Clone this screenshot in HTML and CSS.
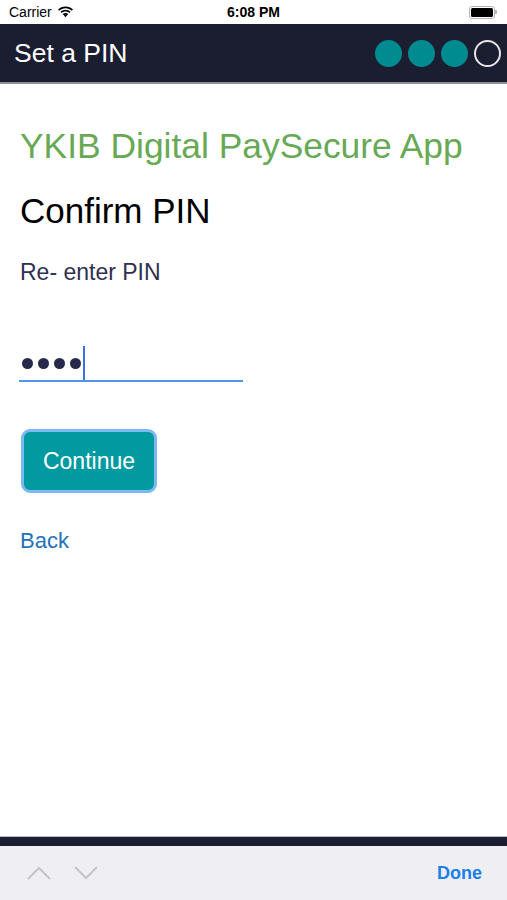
FILE: index.html
```html
<!DOCTYPE html>
<html>
<head>
    <link rel="stylesheet" href="styles.css">
</head>
<body>
    <div class="screen">
        <div class="status-bar">
            <div class="carrier">
                Carrier
                <svg class="wifi" width="17" height="12" viewBox="0 0 17 12">
                    <path d="M8.5 2.2c2.4 0 4.6.9 6.3 2.5l1.2-1.3C14 1.5 11.4.4 8.5.4S3 1.5 1 3.4l1.2 1.3c1.7-1.6 3.9-2.5 6.3-2.5z" fill="#000"/>
                    <path d="M8.5 5.5c1.5 0 2.8.5 3.9 1.5l1.2-1.3C12.2 4.4 10.4 3.7 8.5 3.7S4.8 4.4 3.4 5.7L4.6 7c1.1-1 2.4-1.5 3.9-1.5z" fill="#000"/>
                    <path d="M8.5 8.7c.7 0 1.3.2 1.7.6l-1.7 1.9-1.7-1.9c.4-.4 1-.6 1.7-.6z" fill="#000"/>
                    <path d="M8.5 7c1.1 0 2 .4 2.8 1L10.2 9.3C9.7 8.9 9.1 8.7 8.5 8.7s-1.2.2-1.7.6L5.7 8c.8-.6 1.7-1 2.8-1z" fill="#000"/>
                </svg>
            </div>
            <div class="clock">6:08 PM</div>
            <div class="battery">
                <span class="battery-body"><span class="battery-level"></span></span>
                <span class="battery-tip"></span>
            </div>
        </div>

        <div class="nav-bar">
            <div class="nav-title">Set a PIN</div>
            <div class="steps">
                <span class="step done"></span>
                <span class="step done"></span>
                <span class="step done"></span>
                <span class="step"></span>
            </div>
        </div>

        <div class="content">
            <h1 class="app-name">YKIB Digital PaySecure App</h1>
            <h2 class="heading">Confirm PIN</h2>
            <p class="label">Re- enter PIN</p>
            <div class="pin-field">
                <span class="dot"></span>
                <span class="dot"></span>
                <span class="dot"></span>
                <span class="dot"></span>
                <span class="caret"></span>
            </div>
            <button class="continue">Continue</button>
            <a class="back">Back</a>
        </div>

        <div class="bottom-bar"></div>
        <div class="toolbar">
            <div class="arrows">
                <svg width="24" height="14" viewBox="0 0 24 14">
                    <path d="M1 13 L12 2 L23 13" fill="none" stroke="#c4c4c8" stroke-width="2"/>
                </svg>
                <svg width="24" height="14" viewBox="0 0 24 14">
                    <path d="M1 1 L12 12 L23 1" fill="none" stroke="#c4c4c8" stroke-width="2"/>
                </svg>
            </div>
            <div class="done">Done</div>
        </div>
    </div>
</body>
</html>
```

FILE: styles.css
```css
body {
    margin: 0;
    background-color: white;
    font-family: "Liberation Sans", Arial, sans-serif;
}
.screen {
    width: 507px;
    height: 900px;
    display: flex;
    flex-direction: column;
    overflow: hidden;
}
.status-bar {
    height: 24px;
    display: flex;
    align-items: center;
    justify-content: space-between;
    padding: 0 9px;
    font-size: 14px;
    position: relative;
}
.carrier {
    display: flex;
    align-items: center;
    gap: 5px;
    color: #000;
}
.clock {
    position: absolute;
    left: 0;
    right: 0;
    text-align: center;
    font-weight: bold;
    font-size: 14px;
}
.battery {
    display: flex;
    align-items: center;
    margin-right: 1px;
}
.battery-body {
    width: 22px;
    height: 9px;
    border: 1px solid #b5b5b5;
    border-radius: 3px;
    padding: 1px;
    display: flex;
}
.battery-level {
    flex: 1;
    background-color: #000;
    border-radius: 1.5px;
}
.battery-tip {
    width: 2px;
    height: 4px;
    background-color: #b5b5b5;
    border-radius: 0 1px 1px 0;
}
.nav-bar {
    height: 58px;
    background-color: #1b1d31;
    border-bottom: 2px solid #8e8f98;
    display: flex;
    align-items: center;
    justify-content: space-between;
    padding: 0 6px 0 14px;
}
.nav-title {
    color: white;
    font-size: 26.5px;
}
.steps {
    display: flex;
    gap: 6px;
}
.step {
    width: 23px;
    height: 23px;
    border: 2px solid #e6e6ea;
    border-radius: 50%;
}
.step.done {
    background-color: #008b90;
    border-color: #008b90;
}
.content {
    flex: 1;
    padding: 0 20px;
}
.app-name {
    margin: 40px 0 0;
    font-weight: normal;
    font-size: 35.4px;
    color: #67a955;
    line-height: 44px;
}
.heading {
    margin: 23px 0 0;
    font-weight: normal;
    font-size: 35px;
    color: #000;
    line-height: 40px;
}
.label {
    margin: 28px 0 0;
    font-size: 23px;
    color: #2e3150;
    line-height: 26px;
}
.pin-field {
    margin-top: 61px;
    width: 224px;
    height: 36px;
    border-bottom: 2px solid #4f95ea;
    display: flex;
    align-items: center;
    gap: 5px;
    padding-left: 3px;
    box-sizing: border-box;
    margin-left: -1px;
}
.dot {
    width: 11px;
    height: 11px;
    border-radius: 50%;
    background-color: #262a4a;
}
.caret {
    width: 2px;
    height: 34px;
    background-color: #3d70e6;
    margin-left: -3px;
    align-self: flex-end;
}
.continue {
    display: block;
    margin-top: 47px;
    margin-left: 1px;
    width: 136px;
    height: 64px;
    background-color: #009aa0;
    border: 3px solid #7cb8f2;
    border-radius: 9px;
    color: white;
    font-family: "Liberation Sans", Arial, sans-serif;
    font-size: 23px;
    padding: 0;
}
.back {
    display: block;
    margin-top: 35px;
    font-size: 22px;
    color: #1f72b8;
}
.bottom-bar {
    height: 9px;
    background-color: #1b1d31;
    border-top: 1px solid #b9bac2;
}
.toolbar {
    height: 54px;
    background-color: #efeff3;
    display: flex;
    align-items: center;
    justify-content: space-between;
    padding: 0 25px 0 27px;
}
.arrows {
    display: flex;
    gap: 23px;
}
.done {
    color: #1a7fe6;
    font-weight: bold;
    font-size: 18px;
}
```
